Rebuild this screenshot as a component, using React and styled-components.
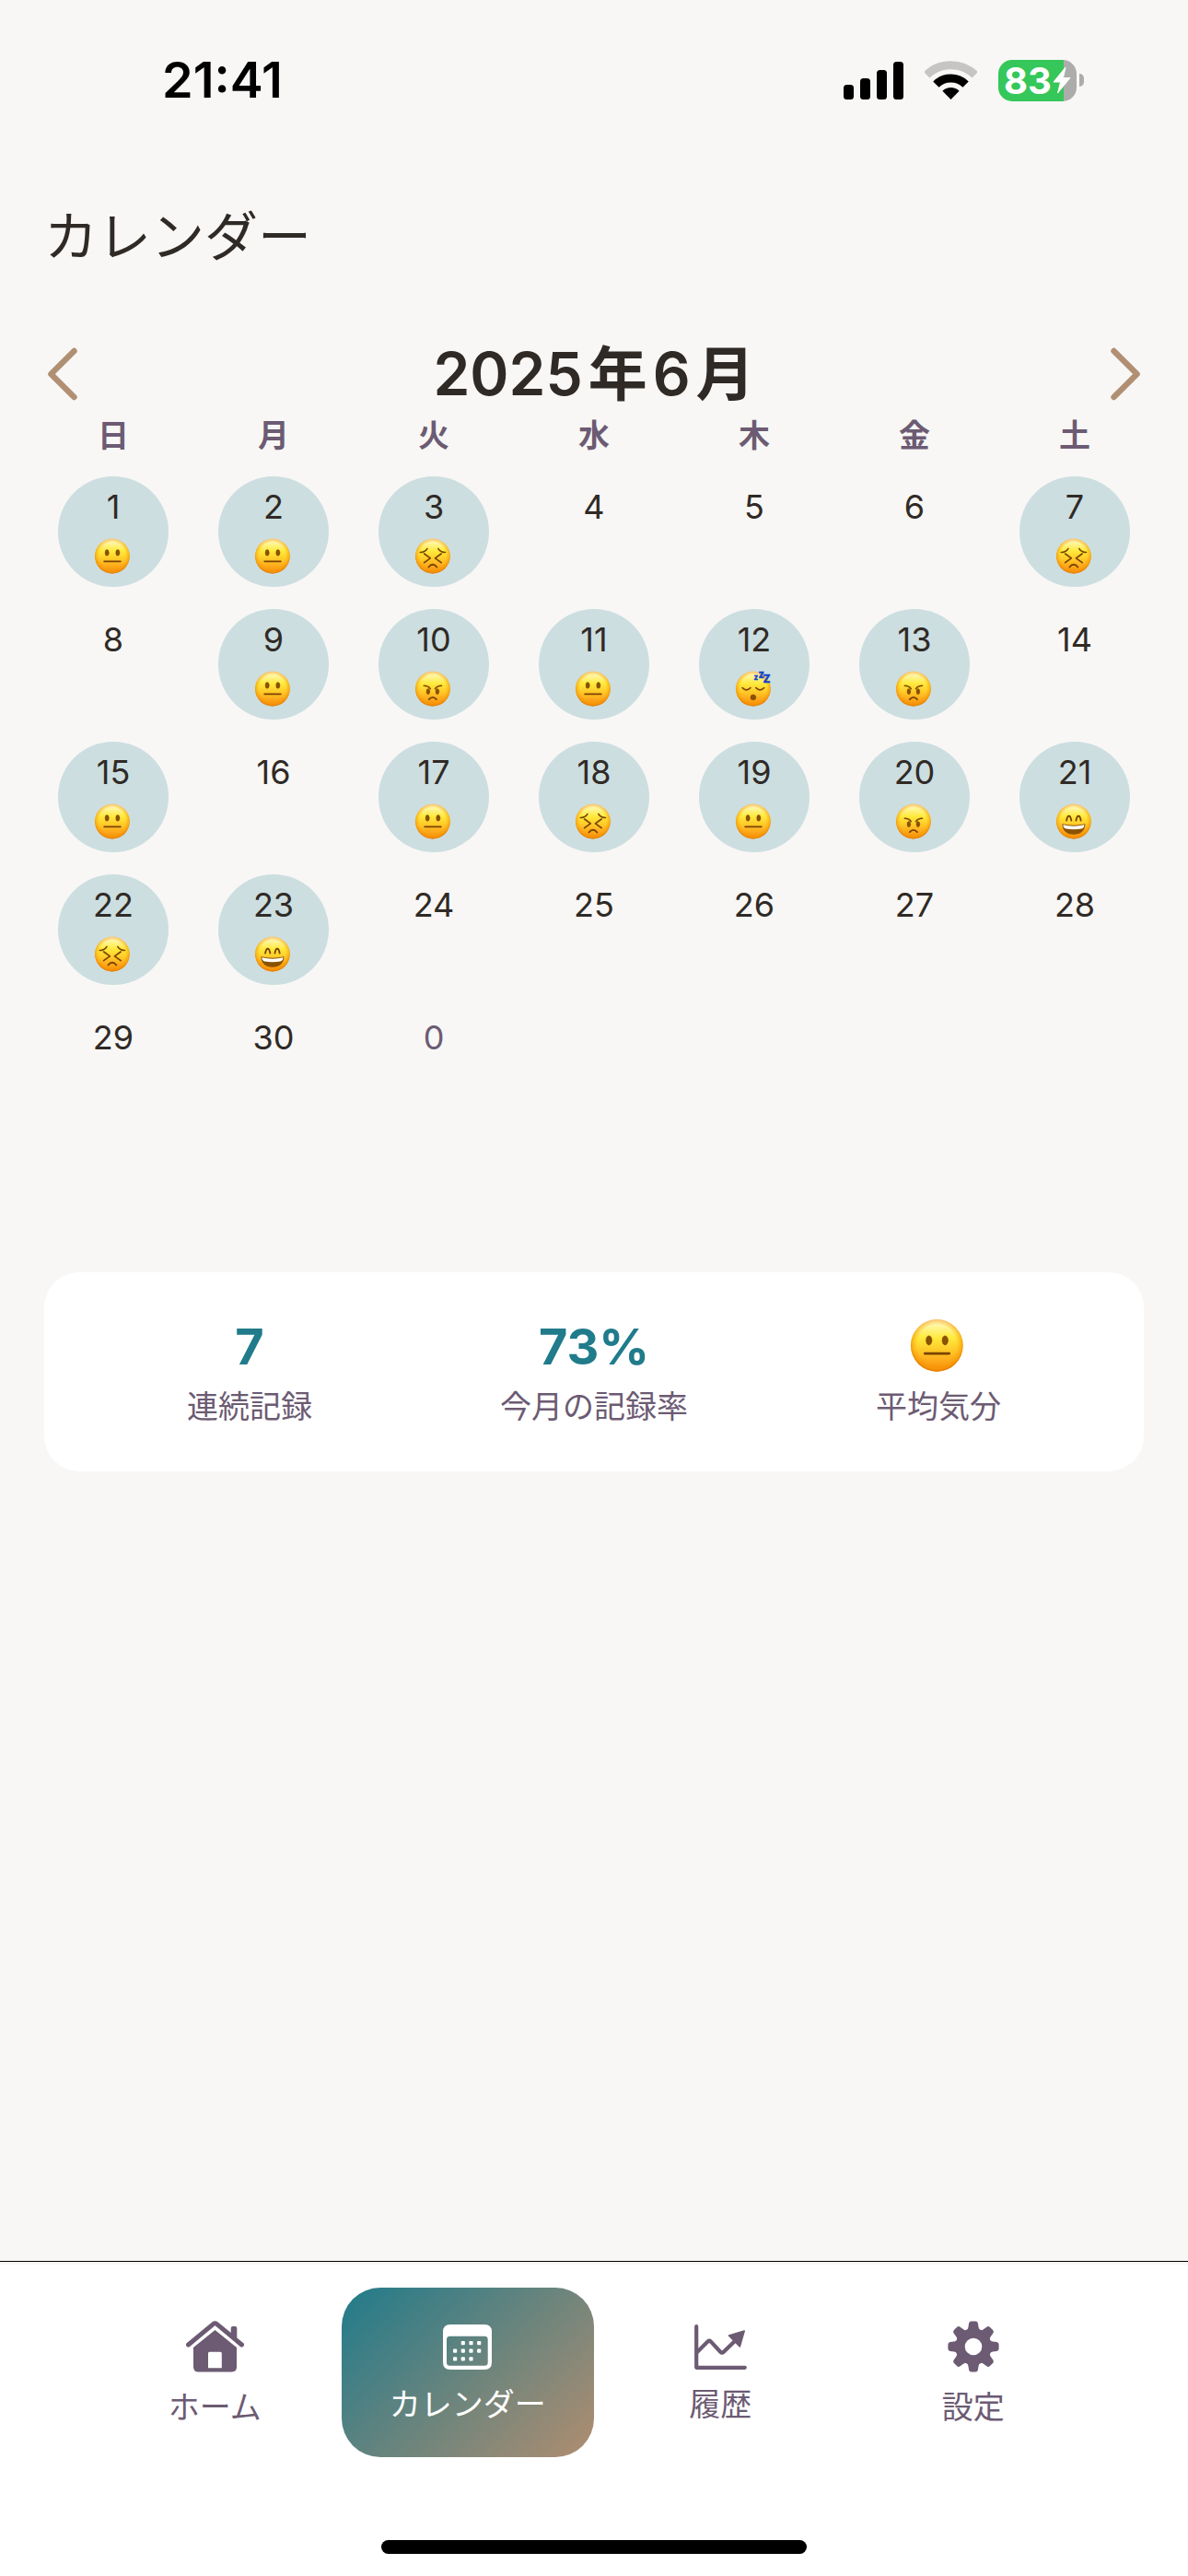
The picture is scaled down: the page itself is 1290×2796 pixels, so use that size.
import React, { useState } from 'react';
import styled, { createGlobalStyle } from 'styled-components'

const GlobalStyle = createGlobalStyle`
    * {
        box-sizing: border-box;
    }
    body {
        margin: 0;
        background: #f8f7f5;
        color: #302a26;
        font-family: Inter, "Noto Sans CJK JP", sans-serif;
    }
    button {
        margin: 0;
        padding: 0;
        border: 0;
        background: none;
        color: inherit;
        font: inherit;
        cursor: pointer;
    }
    svg {
        display: block;
        flex: none;
    }
`;

const Screen = styled.div`
    display: flex;
    flex-direction: column;
    min-height: 100vh;
`;

const StatusBar = styled.header`
    display: flex;
    justify-content: space-between;
    align-items: center;
    padding: 57px 113px 57px 176px;
    color: #000;
`;

const Clock = styled.time`
    font-size: 54px;
    font-weight: 600;
    line-height: 60px;
`;

const StatusIcons = styled.div`
    display: flex;
    align-items: center;
    gap: 23px;
`;

const BatteryWrap = styled.div`
    display: flex;
    align-items: center;
    gap: 3px;
`;

const BatteryBody = styled.div`
    display: flex;
    align-items: center;
    justify-content: center;
    gap: 1px;
    width: 85px;
    height: 45px;
    border-radius: 15px;
    background: linear-gradient(90deg, #35c759 0 71px, #acacaa 71px);
    color: #fff;
    font-size: 40px;
    font-weight: 700;
    line-height: 45px;
`;

const BatteryTip = styled.div`
    width: 5px;
    height: 14px;
    border-radius: 0 5px 5px 0;
    background: #acacaa;
`;

const Main = styled.main`
    flex: 1;
    padding: 38px 36px 37px;
`;

const PageTitle = styled.h1`
    margin: 0 0 69px;
    padding: 0 12px;
    font-size: 58px;
    font-weight: 400;
    line-height: 90px;
`;

const MonthHeader = styled.div`
    display: flex;
    justify-content: space-between;
    align-items: center;
    padding: 0 12px;
    h2 {
        display: flex;
        gap: 6px;
        margin: 0;
        font-size: 64px;
        font-weight: 600;
        line-height: 70px;
    }
`;

const CalendarTable = styled.table`
    width: 100%;
    table-layout: fixed;
    border-collapse: collapse;
    th {
        height: 64px;
        padding: 0;
        color: #6c5b73;
        font-size: 34px;
        font-weight: 700;
        line-height: 48px;
    }
    td {
        padding: 12px 0;
    }
`;

const DayButton = styled.button`
    display: flex;
    flex-direction: column;
    align-items: center;
    gap: 10px;
    width: 120px;
    height: 120px;
    margin: 0 auto;
    padding-top: 9px;
    border-radius: 50%;
    background: ${props => props.$recorded ? '#ccdee0' : 'transparent'};
    color: ${props => props.$muted ? '#6c5b73' : '#302a26'};
    font-size: 36px;
    line-height: 48px;
`;

const StatsCard = styled.section`
    display: flex;
    margin: 156px 12px 0;
    padding: 48px 36px;
    border-radius: 38px;
    background: #fff;
`;

const Stat = styled.div`
    flex: 1;
    display: flex;
    flex-direction: column;
    align-items: center;
    gap: 12px;
`;

const StatValue = styled.div`
    display: flex;
    align-items: center;
    height: 64px;
    color: #207b8b;
    font-size: 54px;
    font-weight: 700;
`;

const StatLabel = styled.div`
    color: #6c5b73;
    font-size: 34px;
    line-height: 44px;
`;

const TabBar = styled.nav`
    padding: 28px 96px 24px;
    border-top: 1px solid #000;
    background: #fff;
    box-shadow: inset 0 3px 0 #f8f7f5;
`;

const TabList = styled.div`
    display: flex;
`;

const Tab = styled.button`
    flex: 1;
    display: flex;
    flex-direction: column;
    align-items: center;
    justify-content: center;
    gap: 16px;
    height: 184px;
    padding-top: 4px;
    border-radius: 42px;
    background: ${props => props.$active ? 'linear-gradient(135deg, #207b8b, #b08d70)' : 'none'};
    color: ${props => props.$active ? '#fff' : '#6c5b73'};
    font-size: 34px;
    line-height: 44px;
`;

const HomeIndicator = styled.div`
    width: 462px;
    height: 15px;
    margin: 90px auto 0;
    border-radius: 8px;
    background: #000;
`;

const SignalIcon = () => (
    <svg width="65" height="41" viewBox="0 0 65 41">
        <rect x="0" y="25" width="11" height="16" rx="3.5" />
        <rect x="18" y="18" width="11" height="23" rx="3.5" />
        <rect x="36" y="9" width="11" height="32" rx="3.5" />
        <rect x="54" y="0" width="11" height="41" rx="3.5" />
    </svg>
)

const WifiIcon = () => (
    <svg width="57" height="42" viewBox="0 0 57 42" fill="none" strokeWidth="9">
        <path d="M2.3 15.3A37.5 37.5 0 0 1 54.7 15.3" stroke="#c6c5c4" />
        <path d="M12.4 25.6A23 23 0 0 1 44.6 25.6" stroke="#000" />
        <path d="M28.5 42L19.4 32.8A13 13 0 0 1 37.6 32.8Z" fill="#000" strokeWidth="0" />
    </svg>
)

const BoltIcon = () => (
    <svg width="20" height="30" viewBox="0 0 20 30" fill="#fff" stroke="#fff" strokeWidth="1" strokeLinejoin="round">
        <path d="M14 1L1 17H8.5L5.5 29L19 12.5H11.5Z" />
    </svg>
)

const ChevronIcon = ({ flip }) => (
    <svg width="40" height="64" viewBox="0 0 40 64" fill="none" stroke="#b08f73" strokeWidth="6.4" strokeLinecap="round" strokeLinejoin="round">
        <path d={flip ? 'M7.5 7L32.6 32L7.5 57' : 'M32.5 7L7.4 32L32.5 57'} />
    </svg>
)

const HomeIcon = () => (
    <svg width="63" height="56" viewBox="0 0 63 56" fill="currentColor">
        <path d="M2.5 26L29.5 3.6Q31.5 2 33.5 3.6L60.5 26" fill="none" stroke="currentColor" strokeWidth="5" strokeLinecap="round" />
        <path d="M48.7 17V8Q48.7 6 50.7 6H53.3Q55.3 6 55.3 8V22Z" />
        <path fillRule="evenodd" d="M31.5 10L55 29V50Q55 55.5 49.5 55.5H13.5Q8 55.5 8 50V29ZM25.5 33.7Q24 33.7 24 35.2V51.3H38.8V35.2Q38.8 33.7 37.3 33.7Z" />
    </svg>
)

const CalendarIcon = () => (
    <svg width="53" height="49" viewBox="0 0 53 49" fill="currentColor">
        <path fillRule="evenodd" d="M8 0H45Q53 0 53 8V41Q53 49 45 49H8Q0 49 0 41V8Q0 0 8 0ZM7.5 12.7Q4 12.7 4 16.2V41.2Q4 44.7 7.5 44.7H45.2Q48.7 44.7 48.7 41.2V16.2Q48.7 12.7 45.2 12.7Z" />
        {[[1, 0], [2, 0], [3, 0], [0, 1], [1, 1], [2, 1], [3, 1], [0, 2], [1, 2], [2, 2]].map(([x, y]) => (
            <rect key={`${x}-${y}`} x={11 + x * 8.7} y={18 + y * 8.6} width="4.2" height="4.2" rx="1" />
        ))}
    </svg>
)

const HistoryIcon = () => (
    <svg width="57" height="49" viewBox="0 0 57 49" fill="none" stroke="currentColor" strokeWidth="4.2" strokeLinecap="round" strokeLinejoin="round">
        <path d="M2.2 2.2V46.8H54.8" />
        <path d="M3 30L14.5 18.6Q16.2 17 17.9 18.6L28.3 29.8Q30 31.6 31.8 29.8L46 16" />
        <path d="M54.2 7L37.5 12L49.3 24Z" fill="currentColor" strokeWidth="1.6" />
    </svg>
)

const GearIcon = () => (
    <svg width="56" height="56" viewBox="-28 -28 56 56" fill="currentColor">
        <circle r="14.5" fill="none" stroke="currentColor" strokeWidth="10.4" />
        {[0, 45, 90, 135, 180, 225, 270, 315].map(angle => (
            <path key={angle} transform={`rotate(${angle})`} d="M-7.5 -17.5Q-6 -18.5 -5.6 -21L-4.9 -25.3Q-4.5 -27.6 -2.2 -27.6H2.2Q4.5 -27.6 4.9 -25.3L5.6 -21Q6 -18.5 7.5 -17.5Z" />
        ))}
    </svg>
)

const FACES = {
    neutral: {
        label: 'ふつう',
        art: (
            <>
                <ellipse cx="34.5" cy="40" rx="5.6" ry="9" fill="#8a5200" />
                <ellipse cx="66" cy="40" rx="5.6" ry="9" fill="#8a5200" />
                <path d="M26.5 65.5H74" strokeWidth="5" />
            </>
        ),
    },
    tired: {
        label: 'つらい',
        art: (
            <>
                <path d="M13 39Q27 39 34 28M87 39Q73 39 66 28" strokeWidth="4" />
                <path d="M25 43L43 56L25 69M75 43L57 56L75 69" strokeWidth="4.6" />
                <path d="M38 82Q50 67 62 82" strokeWidth="5" />
            </>
        ),
    },
    angry: {
        label: 'イライラ',
        art: (
            <>
                <path d="M24 41Q37 41 43 50M76 41Q63 41 57 50" strokeWidth="4" />
                <ellipse cx="36.5" cy="58" rx="5" ry="8.5" fill="#8a5200" />
                <ellipse cx="63.5" cy="58" rx="5" ry="8.5" fill="#8a5200" />
                <path d="M39 81Q50 69 61 81" strokeWidth="5" />
            </>
        ),
    },
    sleepy: {
        label: 'ねむい',
        art: (
            <>
                <path d="M18 47Q30 60 42 47M58 47Q70 60 82 47" strokeWidth="4.5" />
                <circle cx="50" cy="75" r="8" fill="#8a5200" />
                <g fill="#1443cc" stroke="#1443cc" strokeWidth="1" fontFamily="Inter, sans-serif" fontWeight="800">
                    <text x="52" y="24" fontSize="22">z</text>
                    <text x="65" y="18" fontSize="30">z</text>
                    <text x="79" y="32" fontSize="32">Z</text>
                </g>
            </>
        ),
    },
    happy: {
        label: 'うれしい',
        art: (
            <>
                <path d="M29 47Q31 34 36 34Q41 34 43 47M57 47Q59 34 64 34Q69 34 71 47" strokeWidth="5" />
                <path d="M16 57Q50 65 84 57Q82 88 50 88Q18 88 16 57Z" fill="#8a5200" stroke="none" />
                <path d="M19 60Q50 67 81 60Q81 70 73 71Q50 75 27 71Q19 70 19 60Z" fill="#fff" stroke="none" />
            </>
        ),
    },
}

// 顔は枠の中で少し左に寄せ、右側は「zzz」の余白にする
const MoodFace = ({ mood, size }) => (
    <svg width={size} height={size} viewBox="0 0 108 108" overflow="visible" role="img" aria-label={FACES[mood].label}>
        <circle cx="51" cy="53" r="51" fill="url(#faceFill)" />
        <circle cx="51" cy="53" r="51" fill="url(#faceRim)" />
        <g transform="translate(1 3)" fill="none" stroke="#7a4300" strokeLinecap="round" strokeLinejoin="round">
            {FACES[mood].art}
        </g>
    </svg>
)

const HiddenDefs = styled.svg`
    position: absolute;
`;

const FaceGradients = () => (
    <HiddenDefs width="0" height="0" aria-hidden="true">
        <defs>
            <linearGradient id="faceFill" x1="0" y1="0" x2="0" y2="1">
                <stop offset="0" stopColor="#fffbe0" />
                <stop offset="0.1" stopColor="#fff7a8" />
                <stop offset="0.35" stopColor="#ffea3c" />
                <stop offset="0.6" stopColor="#ffc828" />
                <stop offset="0.8" stopColor="#fda81a" />
                <stop offset="1" stopColor="#f58a08" />
            </linearGradient>
            <radialGradient id="faceRim" cx="0.5" cy="0.48" r="0.52">
                <stop offset="0.72" stopColor="#f79400" stopOpacity="0" />
                <stop offset="0.9" stopColor="#f79400" stopOpacity="0.5" />
                <stop offset="1" stopColor="#dc7400" stopOpacity="0.95" />
            </radialGradient>
        </defs>
    </HiddenDefs>
)

const WEEKDAYS = ['日', '月', '火', '水', '木', '金', '土']

const RECORDS = {
    1: 'neutral', 2: 'neutral', 3: 'tired', 7: 'tired',
    9: 'neutral', 10: 'angry', 11: 'neutral', 12: 'sleepy', 13: 'angry',
    15: 'neutral', 17: 'neutral', 18: 'tired', 19: 'neutral', 20: 'angry', 21: 'happy',
    22: 'tired', 23: 'happy',
}

const WEEKS = [0, 7, 14, 21].map(start => WEEKDAYS.map((_, i) => start + i + 1))
WEEKS.push([29, 30, 0, null, null, null, null])

const TABS = [
    { id: 'home', label: 'ホーム', Icon: HomeIcon },
    { id: 'calendar', label: 'カレンダー', Icon: CalendarIcon },
    { id: 'history', label: '履歴', Icon: HistoryIcon },
    { id: 'settings', label: '設定', Icon: GearIcon },
]

const App = () => {
    const [activeTab, setActiveTab] = useState('calendar')

    return (
        <Screen lang="ja">
            <GlobalStyle />
            <FaceGradients />
            <StatusBar>
                <Clock>21:41</Clock>
                <StatusIcons>
                    <SignalIcon />
                    <WifiIcon />
                    <BatteryWrap>
                        <BatteryBody>
                            <span>83</span>
                            <BoltIcon />
                        </BatteryBody>
                        <BatteryTip />
                    </BatteryWrap>
                </StatusIcons>
            </StatusBar>
            <Main>
                <PageTitle>カレンダー</PageTitle>
                <MonthHeader>
                    <button type="button" aria-label="前の月"><ChevronIcon /></button>
                    <h2><span>2025</span><span>年</span><span>6</span><span>月</span></h2>
                    <button type="button" aria-label="次の月"><ChevronIcon flip /></button>
                </MonthHeader>
                <CalendarTable>
                    <thead>
                        <tr>
                            {WEEKDAYS.map(day => <th key={day} scope="col">{day}</th>)}
                        </tr>
                    </thead>
                    <tbody>
                        {WEEKS.map((week, index) => (
                            <tr key={index}>
                                {week.map((day, i) => (
                                    <td key={i}>
                                        {day !== null && (
                                            <DayButton type="button" $recorded={!!RECORDS[day]} $muted={day === 0}>
                                                <span>{day}</span>
                                                {RECORDS[day] && <MoodFace mood={RECORDS[day]} size={40} />}
                                            </DayButton>
                                        )}
                                    </td>
                                ))}
                            </tr>
                        ))}
                    </tbody>
                </CalendarTable>
                <StatsCard>
                    <Stat>
                        <StatValue>7</StatValue>
                        <StatLabel>連続記録</StatLabel>
                    </Stat>
                    <Stat>
                        <StatValue>73%</StatValue>
                        <StatLabel>今月の記録率</StatLabel>
                    </Stat>
                    <Stat>
                        <StatValue><MoodFace mood="neutral" size={60} /></StatValue>
                        <StatLabel>平均気分</StatLabel>
                    </Stat>
                </StatsCard>
            </Main>
            <TabBar>
                <TabList>
                    {TABS.map(({ id, label, Icon }) => (
                        <Tab key={id} type="button" $active={activeTab === id} onClick={() => { setActiveTab(id) }}>
                            <Icon />
                            <span>{label}</span>
                        </Tab>
                    ))}
                </TabList>
                <HomeIndicator />
            </TabBar>
        </Screen>
    )
}
export default App
